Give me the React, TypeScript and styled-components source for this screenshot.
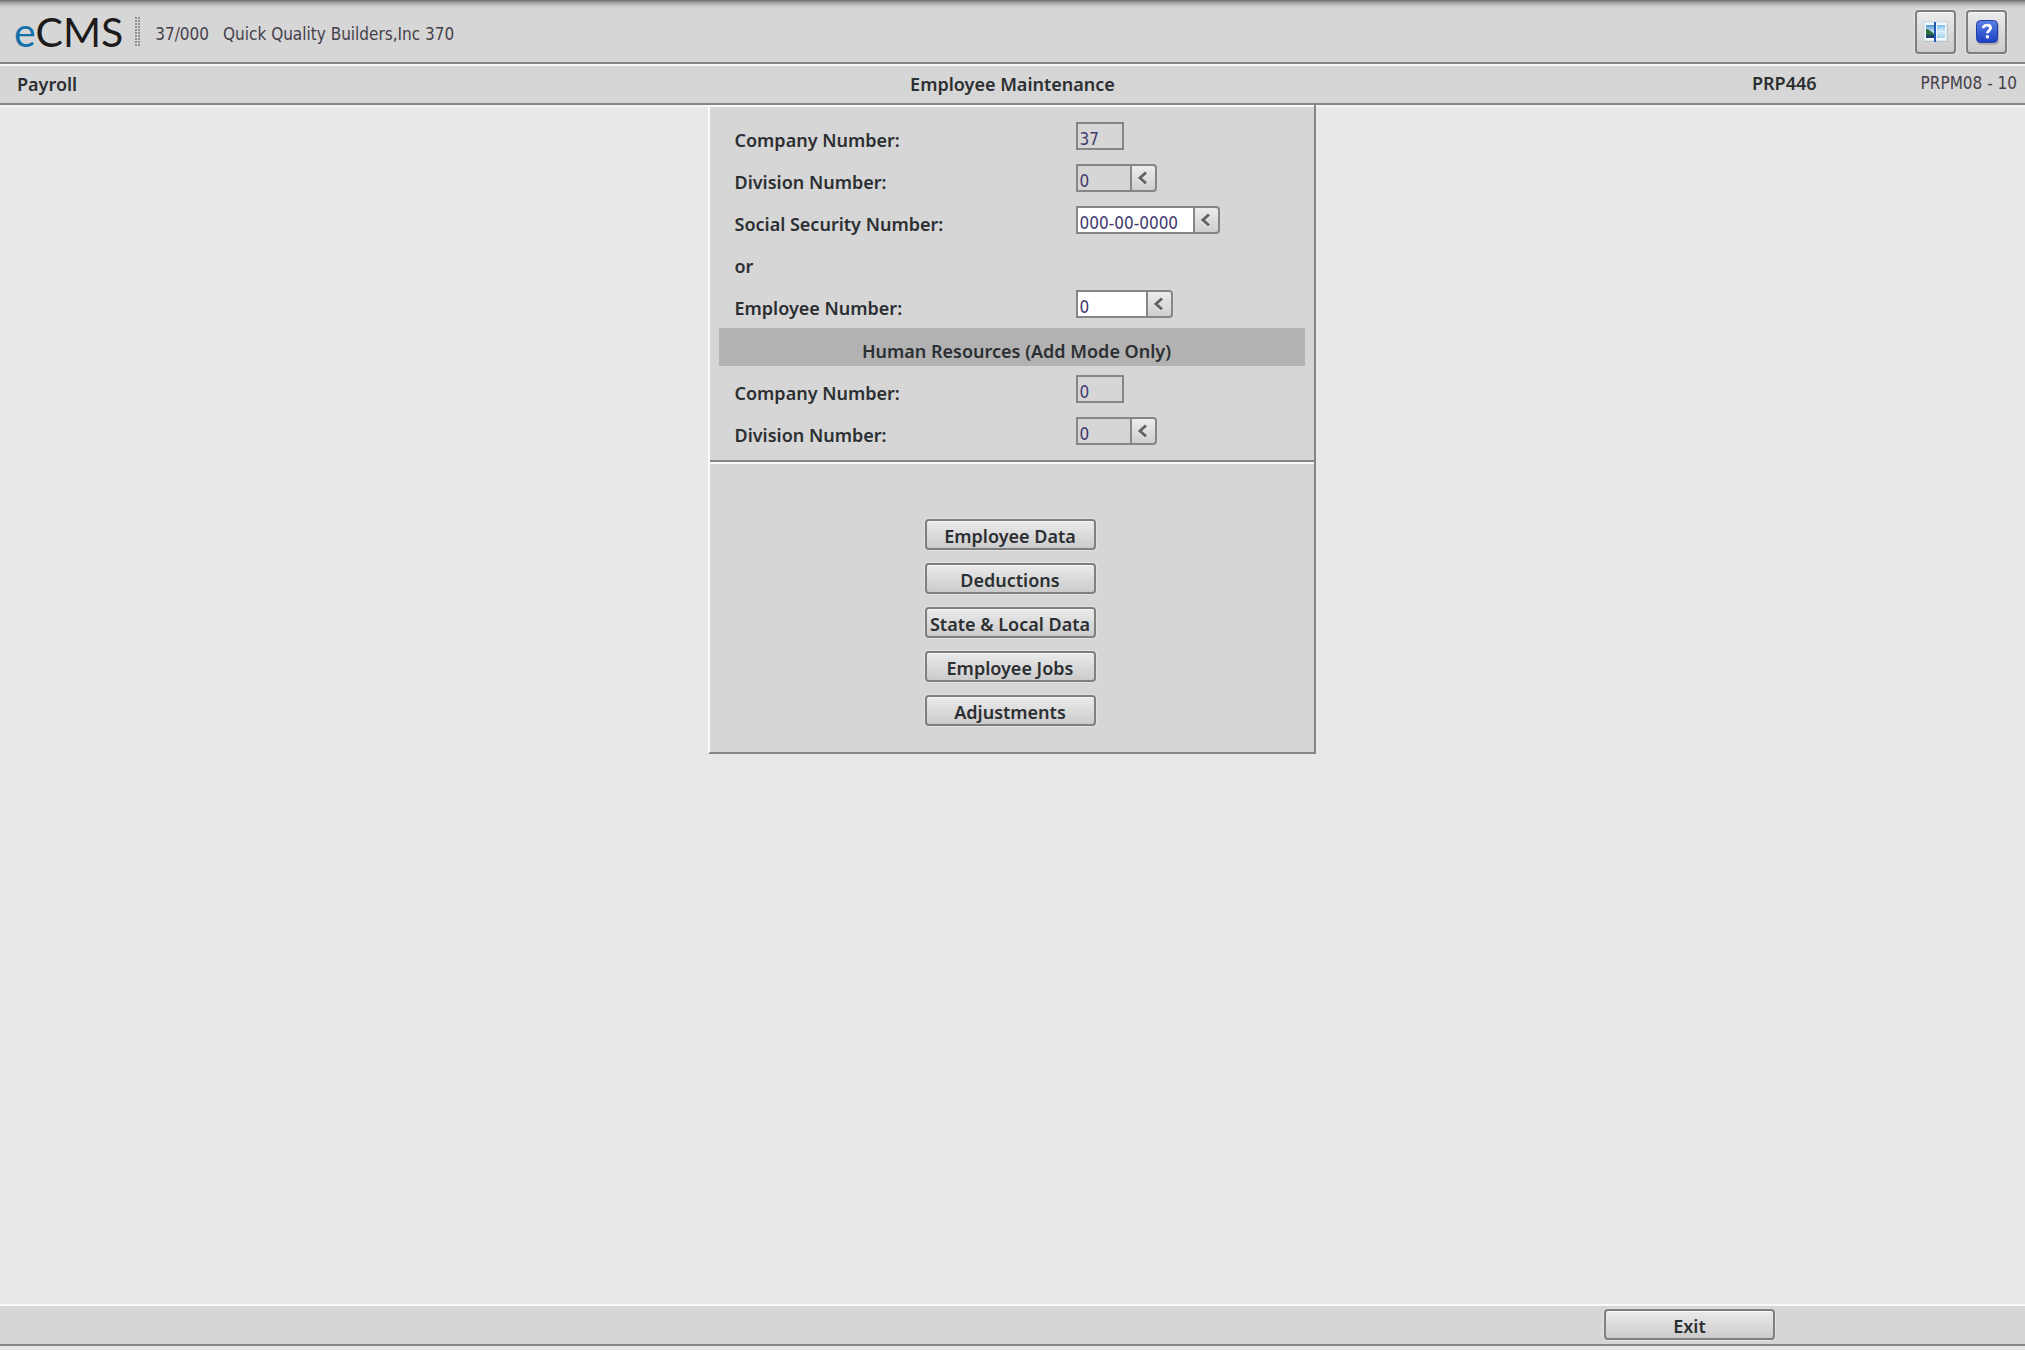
import React from "react";
import styled, { createGlobalStyle, css } from "styled-components";

const line = "#868686";
const face = "#d6d6d6";

const GlobalStyle = createGlobalStyle`
  * { box-sizing: border-box; }
  body {
    margin: 0;
    background: #e8e8e8;
    color: #2c2f32;
    font-family: "Noto Sans", "Open Sans", sans-serif;
    font-size: 17px;
  }
  button, input { font: inherit; color: inherit; margin: 0; }
`;

const Page = styled.div`
  display: flex;
  flex-direction: column;
  min-height: 100vh;
`;

const Header = styled.header`
  display: flex;
  align-items: center;
  height: 64px;
  padding: 4px 18px 2px 14px;
  background: linear-gradient(#6f6f6f, #a8a8a8 3px, #cacaca 6px, ${face} 9px);
  border-bottom: 2px solid ${line};
`;

const Logo = styled.div`
  font-family: Lato, sans-serif;
  font-size: 41px;
  line-height: 48px;
  color: #1c1a1b;
`;

const LogoAccent = styled.span`
  color: #1470ab;
`;

const Grip = styled.div`
  width: 6px;
  height: 30px;
  margin: 0 14px 0 12px;
  background-image: radial-gradient(circle at 1px 1px, #8e8e8e 1px, transparent 1px);
  background-size: 3px 3px;
`;

const Company = styled.div`
  display: flex;
  gap: 14px;
  flex: 1;
  font-family: "DejaVu Sans Condensed", "Noto Sans", sans-serif;
  color: #45404a;
  padding-top: 4px;
`;

const Tools = styled.div`
  display: flex;
  gap: 10px;
`;

const raised = css`
  border: 2px solid #7f7f7f;
  border-radius: 4px;
  background: linear-gradient(#ebebeb, #cbcbcb);
  box-shadow: 0 0 0 1px #e2e2e2, inset 0 1px 0 #f8f8f8;
  cursor: pointer;
`;

const ToolButton = styled.button`
  ${raised}
  display: grid;
  place-items: center;
  width: 41px;
  height: 44px;
  padding: 0;
`;

const TitleBar = styled.div`
  display: grid;
  grid-template-columns: 1fr auto 1fr;
  align-items: center;
  height: 41px;
  padding: 0 8px 2px;
  background: ${face};
  border-top: 2px solid #f8f8f8;
  border-bottom: 2px solid ${line};
  font-size: 18px;
  font-weight: 600;
`;

const Title = styled.h1`
  margin: 0;
  font-size: 18px;
  font-weight: 600;
`;

const Module = styled.div`
  padding-left: 9px;
`;

const Codes = styled.div`
  display: flex;
  align-items: center;
  justify-content: flex-end;
  gap: 104px;
  padding-bottom: 2px;
`;

const ScreenId = styled.span`
  font-family: "DejaVu Sans Condensed", "Noto Sans", sans-serif;
  font-size: 17px;
  font-weight: 400;
  color: #45404a;
`;

const Main = styled.main`
  flex: 1;
  padding-right: 2px;
  border-top: 2px solid #f4f4f4;
`;

const Panel = styled.div`
  width: 608px;
  margin: -2px auto 0;
  background: ${face};
  border-left: 2px solid #fafafa;
  border-right: 2px solid ${line};
  border-bottom: 2px solid ${line};
`;

const Form = styled.form`
  padding: 8px 9px;
  border-top: 2px solid #fafafa;
  border-bottom: 2px solid ${line};
`;

const Row = styled.div`
  display: grid;
  grid-template-columns: 341px 1fr;
  align-items: center;
  height: 42px;
  padding-left: 16px;
`;

const Label = styled.label`
  padding-top: 8px;
  font-size: 18px;
  font-weight: 600;
`;

const Band = styled.h2`
  margin: 3px 0 2px;
  height: 38px;
  padding: 8px 0 0 10px;
  background: #b2b2b2;
  font-size: 18px;
  line-height: 30px;
  font-weight: 600;
  text-align: center;
`;

const Field = styled.div`
  display: flex;
  height: 28px;
`;

const Box = styled.input<{ $width: number }>`
  width: ${(p) => p.$width}px;
  height: 28px;
  padding: 5px 0 0 2px;
  border: 2px solid ${line};
  border-radius: 0;
  background: ${(p) => (p.readOnly ? face : "#ffffff")};
  font-family: "DejaVu Sans Condensed", "Noto Sans", sans-serif;
  font-size: 17px;
  color: #41386e;
  outline: none;
`;

const Lookup = styled.button`
  display: grid;
  place-items: center;
  width: 25px;
  height: 28px;
  padding: 0;
  border: 2px solid ${line};
  border-left: 0;
  border-radius: 0 4px 4px 0;
  background: linear-gradient(#ececec, #cfcfcf);
  cursor: pointer;
`;

const Actions = styled.div`
  display: flex;
  flex-direction: column;
  align-items: center;
  gap: 13px;
  padding: 55px 3px 26px 0;
  border-top: 2px solid #fafafa;
`;

const PushButton = styled.button`
  ${raised}
  width: 171px;
  height: 31px;
  padding: 3px 0 0;
  font-size: 18px;
  line-height: 24px;
  font-weight: 600;
  white-space: nowrap;
`;

const Footer = styled.footer`
  display: flex;
  justify-content: flex-end;
  height: 42px;
  margin-bottom: 4px;
  padding: 3px 250px 0 0;
  background: ${face};
  border-top: 2px solid #fafafa;
  border-bottom: 2px solid ${line};
`;

function SplitIcon() {
  return (
    <svg width="26" height="24" viewBox="0 0 26 24" aria-hidden="true">
      <defs>
        <linearGradient id="sky" x1="0" y1="0" x2="0" y2="1">
          <stop offset="0" stopColor="#4a94d4" />
          <stop offset="0.5" stopColor="#c4e4f4" />
          <stop offset="1" stopColor="#3c8ab8" />
        </linearGradient>
        <linearGradient id="pale" x1="0" y1="0" x2="0" y2="1">
          <stop offset="0" stopColor="#7cbcec" />
          <stop offset="0.5" stopColor="#d8effa" />
          <stop offset="1" stopColor="#9fd0ea" />
        </linearGradient>
      </defs>
      <rect x="2" y="4" width="23" height="18" fill="#909090" opacity="0.5" />
      <rect x="1" y="2" width="23" height="19" fill="#f4fafd" stroke="#c4d8e4" />
      <rect x="3" y="5" width="9" height="13" fill="url(#sky)" />
      <path d="M3 9c3 0 6 3 9 6v2H3z" fill="#2c6b3c" />
      <path d="M3 15h9v3H3z" fill="#1d3f6e" />
      <rect x="14" y="5" width="8" height="13" fill="url(#pale)" />
      <rect x="11" y="2" width="2" height="20" fill="#2454b4" />
    </svg>
  );
}

function HelpIcon() {
  return (
    <svg width="24" height="26" viewBox="0 0 24 26" aria-hidden="true">
      <defs>
        <linearGradient id="help" x1="0" y1="0" x2="0" y2="1">
          <stop offset="0" stopColor="#5c80e4" />
          <stop offset="1" stopColor="#1c3fc4" />
        </linearGradient>
      </defs>
      <rect x="2" y="3" width="22" height="23" rx="4" fill="#8d8d95" opacity="0.5" />
      <rect x="1.5" y="1.5" width="21" height="22" rx="4" fill="url(#help)" stroke="#2440a8" />
      <path
        d="M8.5 9.2V7.8C9.4 6.6 10.6 6.2 12 6.2c2.2 0 3.6 1.1 3.6 2.9 0 2.3-3.2 2.6-3.2 5.2"
        fill="none"
        stroke="#fff"
        strokeWidth="2.8"
      />
      <rect x="10.9" y="16.3" width="3" height="3" fill="#fff" />
    </svg>
  );
}

function Chevron() {
  return (
    <svg width="12" height="14" viewBox="0 0 12 14" aria-hidden="true">
      <path d="M9 2.5L3 8l6 5.5" fill="none" stroke="#f6f6f6" strokeWidth="3" />
      <path d="M9 1.5L3 7l6 5.5" fill="none" stroke="#636363" strokeWidth="3" />
    </svg>
  );
}

type EntryProps = {
  id: string;
  label: string;
  value: string;
  width: number;
  readOnly?: boolean;
  lookup?: boolean;
};

function Entry({ id, label, value, width, readOnly, lookup }: EntryProps) {
  return (
    <Row>
      <Label htmlFor={id}>{label}</Label>
      <Field>
        <Box id={id} type="text" defaultValue={value} readOnly={readOnly} $width={width} />
        {lookup && (
          <Lookup type="button" aria-label={`Look up ${label.replace(":", "")}`}>
            <Chevron />
          </Lookup>
        )}
      </Field>
    </Row>
  );
}

const actions = ["Employee Data", "Deductions", "State & Local Data", "Employee Jobs", "Adjustments"];

export default function App() {
  return (
    <Page>
      <GlobalStyle />
      <Header>
        <Logo>
          <LogoAccent>e</LogoAccent>CMS
        </Logo>
        <Grip />
        <Company>
          <span>37/000</span>
          <span>Quick Quality Builders,Inc 370</span>
        </Company>
        <Tools>
          <ToolButton type="button" aria-label="Split view">
            <SplitIcon />
          </ToolButton>
          <ToolButton type="button" aria-label="Help">
            <HelpIcon />
          </ToolButton>
        </Tools>
      </Header>
      <TitleBar>
        <Module>Payroll</Module>
        <Title>Employee Maintenance</Title>
        <Codes>
          <span>PRP446</span>
          <ScreenId>PRPM08 - 10</ScreenId>
        </Codes>
      </TitleBar>
      <Main>
        <Panel>
          <Form>
            <Entry id="company" label="Company Number:" value="37" width={48} readOnly />
            <Entry id="division" label="Division Number:" value="0" width={56} readOnly lookup />
            <Entry id="ssn" label="Social Security Number:" value="000-00-0000" width={119} lookup />
            <Row>
              <Label as="span">or</Label>
            </Row>
            <Entry id="employee" label="Employee Number:" value="0" width={72} lookup />
            <Band>Human Resources (Add Mode Only)</Band>
            <Entry id="hr-company" label="Company Number:" value="0" width={48} readOnly />
            <Entry id="hr-division" label="Division Number:" value="0" width={56} readOnly lookup />
          </Form>
          <Actions>
            {actions.map((name) => (
              <PushButton key={name} type="button">
                {name}
              </PushButton>
            ))}
          </Actions>
        </Panel>
      </Main>
      <Footer>
        <PushButton type="button">Exit</PushButton>
      </Footer>
    </Page>
  );
}
